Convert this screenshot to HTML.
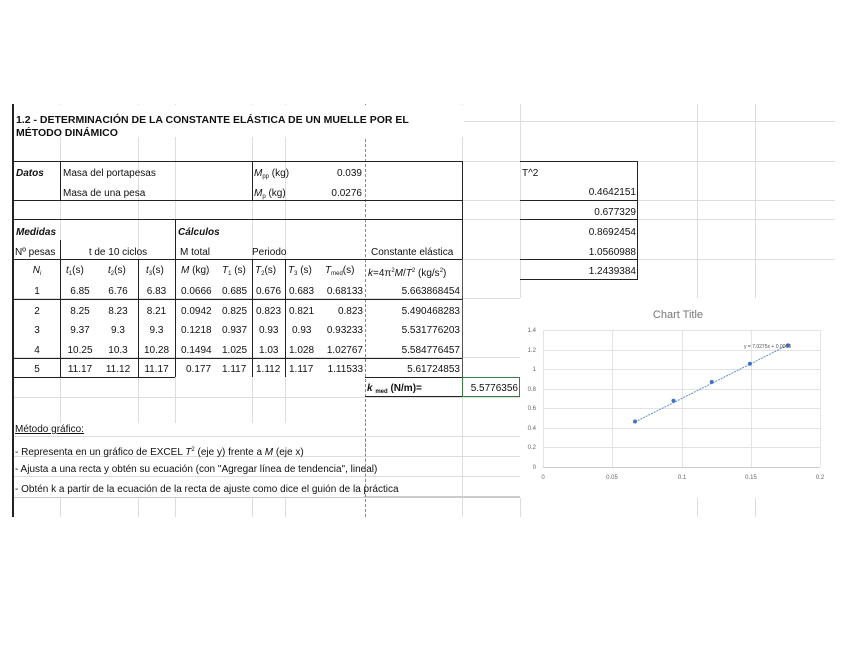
<!DOCTYPE html>
<html><head><meta charset="utf-8"><style>
*{margin:0;padding:0;box-sizing:border-box}
body{width:848px;height:655px;background:#fff;position:relative;overflow:hidden;font-family:"Liberation Sans",Arial,sans-serif;font-size:10px;color:#111}
.l{position:absolute;background:#222}
.g{position:absolute;background:#ddd}
.t{position:absolute;white-space:nowrap;line-height:12px}
.r{text-align:right}
.c{text-align:center}
.b{font-weight:bold}
i{font-style:italic}
sub{font-size:6px;vertical-align:-2px}
sup{font-size:6px;vertical-align:4px}
</style></head><body>
<div class="g" style="left:60px;top:104px;width:1px;height:413px"></div>
<div class="g" style="left:138px;top:104px;width:1px;height:413px"></div>
<div class="g" style="left:175px;top:104px;width:1px;height:413px"></div>
<div class="g" style="left:252px;top:104px;width:1px;height:413px"></div>
<div class="g" style="left:285px;top:104px;width:1px;height:413px"></div>
<div class="g" style="left:462px;top:104px;width:1px;height:413px"></div>
<div class="g" style="left:520px;top:104px;width:1px;height:413px"></div>
<div class="g" style="left:697px;top:104px;width:1px;height:413px"></div>
<div class="g" style="left:755px;top:104px;width:1px;height:413px"></div>
<div style="position:absolute;left:365px;top:104px;height:413px;border-left:1px dashed #888"></div>
<div class="g" style="left:13px;top:121px;width:822px;height:1px"></div>
<div class="g" style="left:13px;top:161px;width:822px;height:1px"></div>
<div class="g" style="left:13px;top:200px;width:822px;height:1px"></div>
<div class="g" style="left:13px;top:219px;width:822px;height:1px"></div>
<div class="g" style="left:13px;top:259px;width:822px;height:1px"></div>
<div class="g" style="left:13px;top:298px;width:822px;height:1px"></div>
<div class="g" style="left:13px;top:357px;width:822px;height:1px"></div>
<div class="g" style="left:13px;top:397px;width:822px;height:1px"></div>
<div class="g" style="left:13px;top:436px;width:822px;height:1px"></div>
<div class="g" style="left:13px;top:456px;width:822px;height:1px"></div>
<div class="g" style="left:13px;top:476px;width:822px;height:1px"></div>
<div class="g" style="left:13px;top:496px;width:822px;height:2px;background:#ccc"></div>
<div style="position:absolute;left:14px;top:105px;width:450px;height:32px;background:#fff"></div>
<div style="position:absolute;left:14px;top:423px;width:350px;height:74px;background:#fff"></div>
<div style="position:absolute;left:14px;top:423px;width:440px;height:12px;background:#fff"></div>
<div class="g" style="left:13px;top:436px;width:450px;height:1px"></div>
<div class="g" style="left:13px;top:456px;width:450px;height:1px"></div>
<div class="g" style="left:13px;top:476px;width:450px;height:1px"></div>
<div style="position:absolute;left:365px;top:423px;height:74px;border-left:1px dashed #888"></div>
<div class="l" style="left:12px;top:104px;width:2px;height:413px"></div>
<div class="l" style="left:13px;top:161px;width:449px;height:1px"></div>
<div class="l" style="left:13px;top:200px;width:449px;height:1px"></div>
<div class="l" style="left:13px;top:219px;width:449px;height:1px"></div>
<div class="l" style="left:13px;top:259px;width:449px;height:1px"></div>
<div class="l" style="left:13px;top:299px;width:449px;height:1px"></div>
<div class="l" style="left:13px;top:358px;width:449px;height:1px"></div>
<div class="l" style="left:13px;top:377px;width:162px;height:1px"></div>
<div class="l" style="left:365px;top:377px;width:97px;height:1px"></div>
<div class="l" style="left:365px;top:396px;width:97px;height:1px"></div>
<div class="l" style="left:462px;top:161px;width:1px;height:98px"></div>
<div class="l" style="left:462px;top:259px;width:1px;height:118px;background:#555"></div>
<div class="l" style="left:60px;top:161px;width:1px;height:39px"></div>
<div class="l" style="left:252px;top:161px;width:1px;height:39px"></div>
<div class="l" style="left:60px;top:240px;width:1px;height:137px"></div>
<div class="l" style="left:138px;top:259px;width:1px;height:118px"></div>
<div class="l" style="left:175px;top:219px;width:1px;height:158px"></div>
<div class="l" style="left:252px;top:259px;width:1px;height:118px"></div>
<div class="l" style="left:285px;top:259px;width:1px;height:118px"></div>
<div style="position:absolute;left:462px;top:377px;width:58px;height:20px;border:1px solid #3a7d44"></div>
<div class="l" style="left:520px;top:161px;width:118px;height:1px"></div>
<div class="l" style="left:520px;top:200px;width:118px;height:1px"></div>
<div class="l" style="left:520px;top:219px;width:118px;height:1px"></div>
<div class="l" style="left:520px;top:259px;width:118px;height:1px"></div>
<div class="l" style="left:520px;top:279px;width:118px;height:1px"></div>
<div class="l" style="left:637px;top:161px;width:1px;height:118px"></div>

<div class="t b" style="left:16px;top:114px;font-size:10.5px">1.2 - DETERMINACIÓN DE LA CONSTANTE ELÁSTICA DE UN MUELLE POR EL</div>
<div class="t b" style="left:16px;top:127px;font-size:10.5px">MÉTODO DINÁMICO</div>
<div class="t b" style="left:16px;top:168px"><i>Datos</i></div>
<div class="t" style="left:63px;top:168px">Masa del portapesas</div>
<div class="t" style="left:63px;top:188px">Masa de una pesa</div>
<div class="t" style="left:254px;top:168px"><i>M</i><sub>pp</sub> (kg)</div>
<div class="t" style="left:254px;top:188px"><i>M</i><sub>p</sub> (kg)</div>
<div class="t r" style="left:300px;top:168px;width:62px">0.039</div>
<div class="t r" style="left:300px;top:188px;width:62px">0.0276</div>
<div class="t b" style="left:16px;top:227px"><i>Medidas</i></div>
<div class="t b" style="left:178px;top:227px"><i>Cálculos</i></div>
<div class="t" style="left:15px;top:247px">Nº pesas</div>
<div class="t c" style="left:61px;top:247px;width:114px">t de 10 ciclos</div>
<div class="t" style="left:180px;top:247px">M total</div>
<div class="t" style="left:252px;top:247px">Periodo</div>
<div class="t" style="left:371px;top:247px">Constante elástica</div>
<div class="t c" style="left:14px;top:265px;width:46px"><i>N<sub>i</sub></i></div>
<div class="t" style="left:66px;top:265px"><i>t</i><sub>1</sub>(s)</div>
<div class="t" style="left:108px;top:265px"><i>t</i><sub>2</sub>(s)</div>
<div class="t" style="left:146px;top:265px"><i>t</i><sub>3</sub>(s)</div>
<div class="t" style="left:181px;top:265px"><i>M</i> (kg)</div>
<div class="t" style="left:222px;top:265px"><i>T</i><sub>1</sub> (s)</div>
<div class="t" style="left:255px;top:265px"><i>T</i><sub>2</sub>(s)</div>
<div class="t" style="left:288px;top:265px"><i>T</i><sub>3</sub> (s)</div>
<div class="t" style="left:325px;top:265px"><i>T</i><sub>med</sub>(s)</div>
<div class="t" style="left:368px;top:265px"><i>k</i>=4π<sup>2</sup><i>M</i>/<i>T</i><sup>2</sup> (kg/s<sup>2</sup>)</div>

<div class="t c" style="left:14px;top:286px;width:46px">1</div>
<div class="t c" style="left:14px;top:306px;width:46px">2</div>
<div class="t c" style="left:14px;top:325px;width:46px">3</div>
<div class="t c" style="left:14px;top:345px;width:46px">4</div>
<div class="t c" style="left:14px;top:364px;width:46px">5</div>
<div class="t c" style="left:60px;top:286px;width:40px">6.85</div><div class="t c" style="left:98px;top:286px;width:40px">6.76</div><div class="t c" style="left:138px;top:286px;width:37px">6.83</div>
<div class="t c" style="left:60px;top:306px;width:40px">8.25</div><div class="t c" style="left:98px;top:306px;width:40px">8.23</div><div class="t c" style="left:138px;top:306px;width:37px">8.21</div>
<div class="t c" style="left:60px;top:325px;width:40px">9.37</div><div class="t c" style="left:98px;top:325px;width:40px">9.3</div><div class="t c" style="left:138px;top:325px;width:37px">9.3</div>
<div class="t c" style="left:60px;top:345px;width:40px">10.25</div><div class="t c" style="left:98px;top:345px;width:40px">10.3</div><div class="t c" style="left:138px;top:345px;width:37px">10.28</div>
<div class="t c" style="left:60px;top:364px;width:40px">11.17</div><div class="t c" style="left:98px;top:364px;width:40px">11.12</div><div class="t c" style="left:138px;top:364px;width:37px">11.17</div>

<div class="t" style="left:181px;top:286px">0.0666</div><div class="t" style="left:222px;top:286px">0.685</div><div class="t" style="left:256px;top:286px">0.676</div><div class="t" style="left:289px;top:286px">0.683</div><div class="t r" style="left:320px;top:286px;width:43px">0.68133</div>
<div class="t" style="left:181px;top:306px">0.0942</div><div class="t" style="left:222px;top:306px">0.825</div><div class="t" style="left:256px;top:306px">0.823</div><div class="t" style="left:289px;top:306px">0.821</div><div class="t r" style="left:320px;top:306px;width:43px">0.823</div>
<div class="t" style="left:181px;top:325px">0.1218</div><div class="t" style="left:222px;top:325px">0.937</div><div class="t" style="left:259px;top:325px">0.93</div><div class="t" style="left:292px;top:325px">0.93</div><div class="t r" style="left:320px;top:325px;width:43px">0.93233</div>
<div class="t" style="left:181px;top:345px">0.1494</div><div class="t" style="left:222px;top:345px">1.025</div><div class="t" style="left:259px;top:345px">1.03</div><div class="t" style="left:289px;top:345px">1.028</div><div class="t r" style="left:320px;top:345px;width:43px">1.02767</div>
<div class="t" style="left:186px;top:364px">0.177</div><div class="t" style="left:222px;top:364px">1.117</div><div class="t" style="left:256px;top:364px">1.112</div><div class="t" style="left:289px;top:364px">1.117</div><div class="t r" style="left:320px;top:364px;width:43px">1.11533</div>

<div class="t r" style="left:366px;top:286px;width:94px">5.663868454</div>
<div class="t r" style="left:366px;top:306px;width:94px">5.490468283</div>
<div class="t r" style="left:366px;top:325px;width:94px">5.531776203</div>
<div class="t r" style="left:366px;top:345px;width:94px">5.584776457</div>
<div class="t r" style="left:366px;top:364px;width:94px">5.61724853</div>
<div class="t b" style="left:367px;top:383px"><i>k</i> <sub>med</sub> (N/m)=</div>
<div class="t r" style="left:462px;top:383px;width:56px">5.5776356</div>

<div class="t" style="left:15px;top:424px;text-decoration:underline">Método gráfico:</div>
<div class="t" style="left:15px;top:444px">- Representa en un gráfico de EXCEL <i>T</i><sup>2</sup> (eje y) frente a <i>M</i> (eje x)</div>
<div class="t" style="left:15px;top:464px">- Ajusta a una recta y obtén su ecuación (con "Agregar línea de tendencia", lineal)</div>
<div class="t" style="left:15px;top:484px">- Obtén k a partir de la ecuación de la recta de ajuste como dice el guión de la práctica</div>

<div class="t" style="left:522px;top:168px">T^2</div>
<div class="t r" style="left:520px;top:187px;width:116px">0.4642151</div>
<div class="t r" style="left:520px;top:207px;width:116px">0.677329</div>
<div class="t r" style="left:520px;top:227px;width:116px">0.8692454</div>
<div class="t r" style="left:520px;top:247px;width:116px">1.0560988</div>
<div class="t r" style="left:520px;top:266px;width:116px">1.2439384</div>

<svg style="position:absolute;left:520px;top:298px" width="316" height="200" viewBox="520 298 316 200">
<rect x="520" y="298" width="316" height="200" fill="#fff"/>
<text x="678" y="318" font-size="11" fill="#777" text-anchor="middle" font-family="Liberation Sans">Chart Title</text>
<g stroke="#e3e3e3" stroke-width="1">
<line x1="543" y1="330.5" x2="820" y2="330.5"/><line x1="543" y1="350.5" x2="820" y2="350.5"/>
<line x1="543" y1="369.5" x2="820" y2="369.5"/><line x1="543" y1="389.5" x2="820" y2="389.5"/>
<line x1="543" y1="408.5" x2="820" y2="408.5"/><line x1="543" y1="428.5" x2="820" y2="428.5"/>
<line x1="543" y1="447.5" x2="820" y2="447.5"/>
<line x1="543.5" y1="330" x2="543.5" y2="467"/><line x1="612.5" y1="330" x2="612.5" y2="467"/>
<line x1="682.5" y1="330" x2="682.5" y2="467"/><line x1="751.5" y1="330" x2="751.5" y2="467"/><line x1="820.5" y1="330" x2="820.5" y2="467"/>
</g>
<line x1="543" y1="467.5" x2="820" y2="467.5" stroke="#ccc"/>
<g font-size="6" fill="#666" font-family="Liberation Sans" text-anchor="end">
<text x="536" y="332">1.4</text><text x="536" y="352">1.2</text><text x="536" y="371">1</text><text x="536" y="391">0.8</text><text x="536" y="410">0.6</text><text x="536" y="430">0.4</text><text x="536" y="449">0.2</text><text x="536" y="469">0</text>
</g>
<g font-size="6" fill="#666" font-family="Liberation Sans" text-anchor="middle">
<text x="543" y="479">0</text><text x="612" y="479">0.05</text><text x="682" y="479">0.1</text><text x="751" y="479">0.15</text><text x="820" y="479">0.2</text>
</g>
<line x1="635" y1="422" x2="788" y2="345" stroke="#5b8fd0" stroke-dasharray="2,1" stroke-width="1"/>
<g fill="#4472c4">
<circle cx="635" cy="421.5" r="2"/><circle cx="673.5" cy="400.7" r="2"/><circle cx="711.7" cy="382" r="2"/><circle cx="749.9" cy="363.7" r="2"/><circle cx="788" cy="345.4" r="2"/>
</g>
<text x="744" y="348" font-size="5" fill="#555" font-family="Liberation Sans">y = 7.0275x + 0.0008</text>
</svg>
</body></html>
